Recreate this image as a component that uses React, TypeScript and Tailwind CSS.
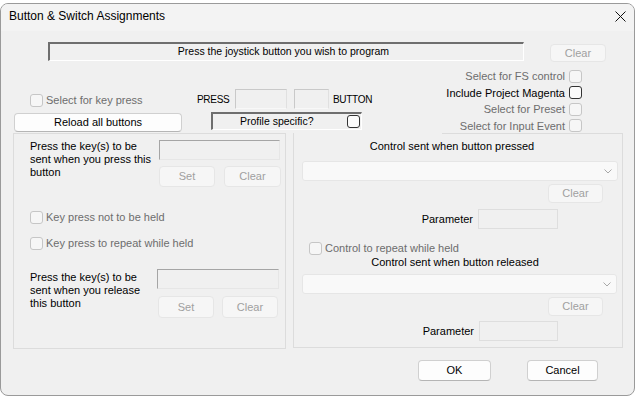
import React from "react";

type P = { className?: string; children?: React.ReactNode };

function Box({ enabled }: { enabled?: boolean }) {
  return (
    <span
      className={
        enabled
          ? "inline-block shrink-0 w-[13px] h-[13px] rounded-[3px] border border-[#333333] bg-[#fbfbfb]"
          : "inline-block shrink-0 w-[13px] h-[13px] rounded-[3px] border border-[#c6c6c6] bg-[#f6f6f6]"
      }
    />
  );
}

function DisBtn({ className, children }: P) {
  return (
    <div
      className={`flex items-center justify-center rounded-[4px] border border-[#e6e6e6] bg-[#f6f6f6] text-[11px] text-[#a0a0a0] shrink-0 ${className ?? ""}`}
    >
      {children}
    </div>
  );
}

function Btn({ className, children }: P) {
  return (
    <div
      className={`flex items-center justify-center rounded-[4px] border border-[#d0d0d0] border-b-[#b5b5b5] bg-[#fdfdfd] text-[11px] text-black shrink-0 ${className ?? ""}`}
    >
      {children}
    </div>
  );
}

function Edit({ className }: P) {
  return (
    <div
      className={`shrink-0 border border-t-[#a5a5a5] border-l-[#a5a5a5] border-b-[#e6e6e6] border-r-[#e6e6e6] bg-[#f0f0f0] ${className ?? ""}`}
    />
  );
}

function ParamEdit({ className }: P) {
  return <div className={`shrink-0 border border-[#dedede] bg-[#f0f0f0] ${className ?? ""}`} />;
}

function Combo({ className }: P) {
  return (
    <div
      className={`shrink-0 flex items-center justify-end pr-[5px] rounded-[3px] border border-[#e6e6e6] bg-[#f9f9f9] ${className ?? ""}`}
    >
      <svg width="8" height="5" viewBox="0 0 8 5">
        <path d="M0.5 0.5L4 4L7.5 0.5" fill="none" stroke="#a8a8a8" strokeWidth="1" />
      </svg>
    </div>
  );
}

function Check({ className, children, enabled }: P & { enabled?: boolean }) {
  return (
    <div
      className={`flex items-center gap-[3px] h-[13px] text-[11px] ${enabled ? "text-black" : "text-[#6d6d6d]"} ${className ?? ""}`}
    >
      <Box enabled={enabled} />
      <span className="whitespace-nowrap">{children}</span>
    </div>
  );
}

function RCheck({ children, enabled }: P & { enabled?: boolean }) {
  return (
    <div
      className={`flex items-center justify-end gap-[4px] h-[17px] text-[11px] ${enabled ? "text-black" : "text-[#6d6d6d]"}`}
    >
      <span className="whitespace-nowrap">{children}</span>
      <Box enabled={enabled} />
    </div>
  );
}

export default function App() {
  return (
    <div className="w-[637px] h-[398px] bg-white overflow-hidden font-['Liberation_Sans',Arial,sans-serif]">
      <div className="mt-[3px] w-[635px] h-[393px] border border-[#9a9a9a] rounded-[8px] bg-[#f0f0f0] flex flex-col overflow-hidden">
        {/* title bar */}
        <div className="h-[27px] shrink-0 bg-[#f3f3f3] flex items-center justify-between pl-[8px] pr-[8px] pb-[3px]">
          <span className="text-[12px] text-black whitespace-nowrap">Button &amp; Switch Assignments</span>
          <svg width="11" height="11" viewBox="0 0 11 11">
            <path d="M0.5 0.5L10.5 10.5M10.5 0.5L0.5 10.5" stroke="#111" strokeWidth="1" />
          </svg>
        </div>

        {/* row 1 */}
        <div className="flex items-start mt-[11px] shrink-0">
          <div className="ml-[47px] w-[476px] h-[19px] border-t-2 border-l-2 border-t-[#6e6e6e] border-l-[#6e6e6e] border-b border-r border-b-white border-r-white flex items-center justify-center text-[10.5px] text-black pr-[6px]">
            Press the joystick button you wish to program
          </div>
          <DisBtn className="ml-[26px] mt-[2px] w-[56px] h-[18px]">Clear</DisBtn>
        </div>

        {/* row 2 */}
        <div className="flex h-[71px] shrink-0">
          <div className="w-[183px] shrink-0 flex flex-col pt-[32px]">
            <Check className="ml-[29px]">Select for key press</Check>
            <Btn className="ml-[13px] mt-[6px] w-[168px] h-[19px]">Reload all buttons</Btn>
          </div>
          <div className="w-[200px] shrink-0 flex flex-col pt-[27px]">
            <div className="flex items-center h-[20px] text-[10px] text-black">
              <span className="ml-[13px] w-[38px] shrink-0 tracking-[-0.3px]">PRESS</span>
              <div className="w-[52px] h-[20px] shrink-0 border border-[#c9c9c9] border-b-[#f8f8f8] border-r-[#e0e0e0] bg-[#f0f0f0]" />
              <div className="ml-[7px] w-[35px] h-[20px] shrink-0 border border-[#c9c9c9] border-b-[#f8f8f8] border-r-[#e0e0e0] bg-[#f0f0f0]" />
              <span className="ml-[4px] shrink-0 whitespace-nowrap tracking-[-0.3px]">BUTTON</span>
            </div>
            <div className="ml-[27px] mt-[3px] w-[151px] h-[18px] flex items-center border-t-2 border-l-2 border-t-[#6e6e6e] border-l-[#6e6e6e] border-b border-r border-b-white border-r-white text-[10.5px] text-black">
              <span className="pl-[27px] whitespace-nowrap">Profile specific?</span>
              <span className="ml-auto mr-[1px] flex">
                <Box enabled />
              </span>
            </div>
          </div>
          <div className="flex-1 flex flex-col items-end pr-[52px] pt-[6px]">
            <RCheck>Select for FS control</RCheck>
            <RCheck enabled>Include Project Magenta</RCheck>
            <RCheck>Select for Preset</RCheck>
            <RCheck>Select for Input Event</RCheck>
          </div>
        </div>

        {/* row 3: group boxes */}
        <div className="flex h-[216px] shrink-0">
          {/* left group */}
          <div className="ml-[12px] w-[273px] h-[216px] shrink-0 border border-[#dcdcdc] flex flex-col">
            <div className="flex mt-[6px]">
              <div className="ml-[16px] w-[129px] text-[11px] leading-[13px] text-black">
                Press the key(s) to be
                <br />
                sent when you press this
                <br />
                button
              </div>
              <div className="flex flex-col">
                <Edit className="w-[121px] h-[20px]" />
                <div className="flex mt-[6px] gap-[9px]">
                  <DisBtn className="w-[56px] h-[21px]">Set</DisBtn>
                  <DisBtn className="w-[57px] h-[21px]">Clear</DisBtn>
                </div>
              </div>
            </div>
            <Check className="ml-[16px] mt-[24px]">Key press not to be held</Check>
            <Check className="ml-[16px] mt-[13px]">Key press to repeat while held</Check>
            <div className="flex mt-[19px]">
              <div className="ml-[16px] w-[127px] pt-[2px] text-[11px] leading-[13px] text-black">
                Press the key(s) to be
                <br />
                sent when you release
                <br />
                this button
              </div>
              <div className="flex flex-col">
                <Edit className="w-[122px] h-[20px]" />
                <div className="flex mt-[7px] ml-[1px] gap-[8px]">
                  <DisBtn className="w-[56px] h-[22px]">Set</DisBtn>
                  <DisBtn className="w-[56px] h-[22px]">Clear</DisBtn>
                </div>
              </div>
            </div>
          </div>

          {/* right group */}
          <div className="ml-[7px] w-[330px] h-[215px] shrink-0 border-l border-r border-b border-[#dcdcdc] flex flex-col">
            <div className="h-px ml-[148px] bg-[#dcdcdc] shrink-0" />
            <div className="mt-[5px] h-[14px] leading-[14px] text-center pr-[12px] text-[11px] text-black">
              Control sent when button pressed
            </div>
            <Combo className="mt-[8px] ml-[8px] w-[316px] h-[20px]" />
            <DisBtn className="mt-[3px] ml-[254px] w-[55px] h-[19px]">Clear</DisBtn>
            <div className="mt-[6px] flex items-center h-[20px]">
              <span className="w-[179px] text-right text-[11px] text-black">Parameter</span>
              <ParamEdit className="ml-[5px] w-[80px] h-[20px]" />
            </div>
            <Check className="ml-[15px] mt-[13px]">Control to repeat while held</Check>
            <div className="h-[14px] leading-[14px] text-center pr-[6px] text-[11px] text-black">
              Control sent when button released
            </div>
            <Combo className="mt-[5px] ml-[8px] w-[315px] h-[20px]" />
            <DisBtn className="mt-[3px] ml-[254px] w-[55px] h-[19px]">Clear</DisBtn>
            <div className="mt-[5px] flex items-center h-[20px]">
              <span className="w-[180px] text-right text-[11px] text-black">Parameter</span>
              <ParamEdit className="ml-[5px] w-[79px] h-[20px]" />
            </div>
          </div>
        </div>

        {/* bottom buttons */}
        <div className="flex mt-[11px] shrink-0">
          <Btn className="ml-[417px] w-[73px] h-[21px]">OK</Btn>
          <Btn className="ml-[36px] w-[71px] h-[21px]">Cancel</Btn>
        </div>
      </div>
    </div>
  );
}
